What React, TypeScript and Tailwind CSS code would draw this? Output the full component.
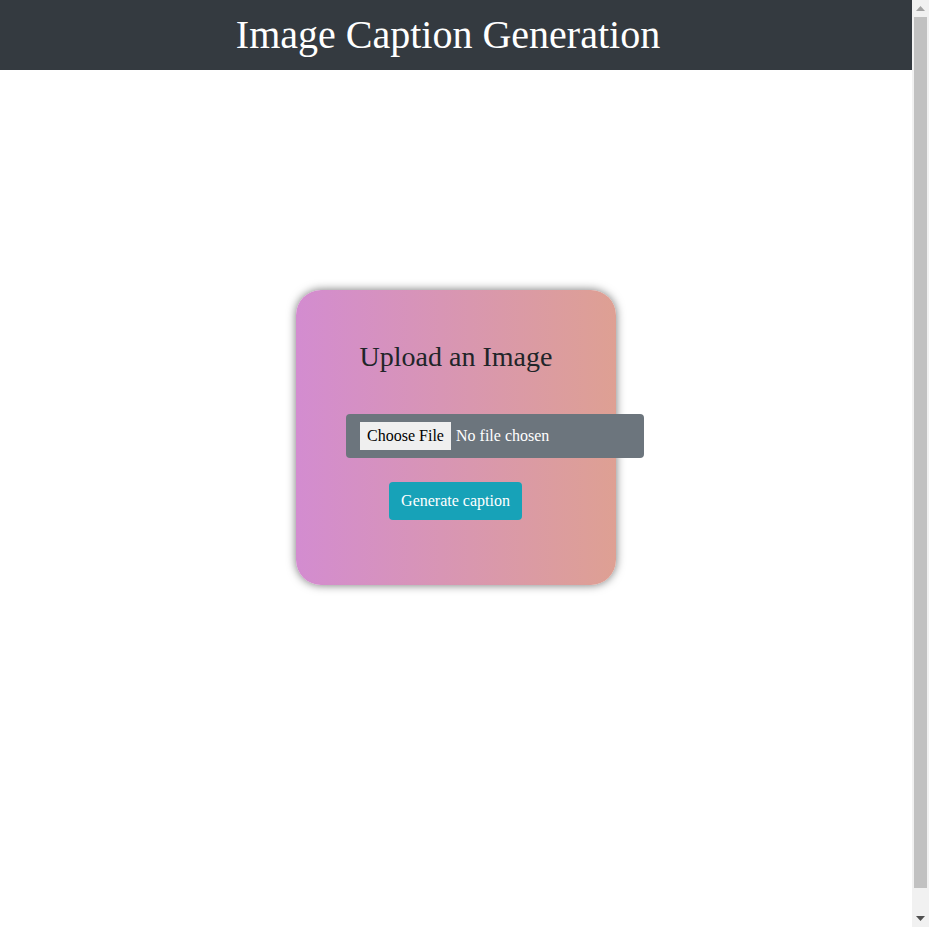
export default function App() {
  const serif = { fontFamily: '"Liberation Serif", "Times New Roman", serif' };
  return (
    <div className="flex h-[927px] overflow-hidden bg-white" style={serif}>
      <div className="w-[912px] shrink-0">
        <header className="h-[70px] bg-[#343a40] flex items-center justify-center pr-[16px]">
          <h1 className="text-[40px] leading-[1.2] text-white font-normal">Image Caption Generation</h1>
        </header>
        <div className="flex justify-center pt-[220px]">
          <div className="w-[320px] h-[295px] rounded-[25px] bg-[linear-gradient(to_right,#d38cd0,#dea093)] shadow-[0_0_10px_rgba(0,0,0,0.55)] pt-[50px] flex flex-col items-center">
            <h3 className="text-[28px] leading-[1.2] text-[#212529] font-normal h-[34px]">Upload an Image</h3>
            <div className="mt-[40px] self-start ml-[50px] w-[298px] h-[44px] rounded-[4px] bg-[#6c757d] flex items-center pl-[14px] text-[16px]">
              <span className="h-[28px] w-[91px] bg-[#efefef] text-black flex items-center justify-center">Choose File</span>
              <span className="ml-[5px] text-white">No file chosen</span>
            </div>
            <button className="mt-[24px] w-[133px] h-[38px] rounded-[4px] bg-[#17a2b8] text-white text-[16px] ml-[-1px]">Generate caption</button>
          </div>
        </div>
      </div>
      <div className="w-[17px] shrink-0 bg-[#f1f1f1] flex flex-col items-center">
        <div className="h-[17px] w-full flex items-center justify-center">
          <svg width="9" height="5" viewBox="0 0 9 5"><polygon points="0,5 9,5 4.5,0" fill="#a3a3a3" /></svg>
        </div>
        <div className="flex-1 w-full px-[2px] pb-[22px]">
          <div className="h-full w-full bg-[#c1c1c1]" />
        </div>
        <div className="h-[17px] w-full flex items-center justify-center">
          <svg width="9" height="5" viewBox="0 0 9 5"><polygon points="0,0 9,0 4.5,5" fill="#505050" /></svg>
        </div>
      </div>
    </div>
  );
}
